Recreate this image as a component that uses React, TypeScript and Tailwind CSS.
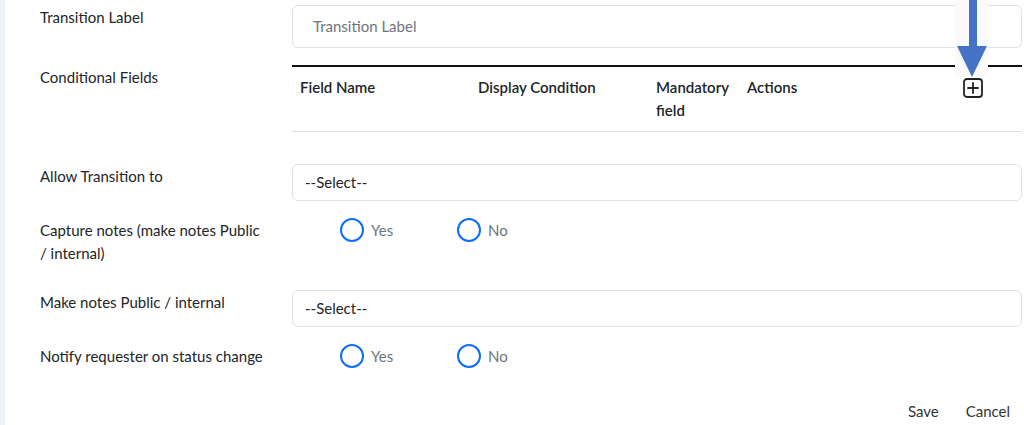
import React from 'react';

function Radio({ label }: { label: string }) {
  return (
    <label className="flex items-center gap-[7px] text-[#6c757d]">
      <span className="inline-block h-[24px] w-[24px] rounded-full border-2 border-[#0d6efd] bg-white" />
      <span>{label}</span>
    </label>
  );
}

function YesNo() {
  return (
    <div className="flex items-center pl-[48px] leading-[23px]">
      <div className="w-[117px]">
        <Radio label="Yes" />
      </div>
      <Radio label="No" />
    </div>
  );
}

function PlusSquare() {
  return (
    <svg width="20" height="20" viewBox="0 0 20 20" fill="none">
      <rect x="1" y="1" width="18" height="18" rx="3" stroke="#222" strokeWidth="1.8" />
      <path d="M10 5v10M5 10h10" stroke="#222" strokeWidth="1.8" strokeLinecap="round" />
    </svg>
  );
}

export default function App() {
  return (
    <div
      className="flex h-[425px] w-full overflow-hidden bg-white text-[15px] text-[#212529]"
      style={{ fontFamily: 'Lato, "Open Sans", sans-serif' }}
    >
      <div className="w-[5px] shrink-0 bg-[#edf2fb]" />

      <div className="relative flex flex-1 flex-col pl-[35px] pr-[2px]">
        {/* Transition label */}
        <div className="mt-[5px] flex">
          <div className="w-[252px] shrink-0 pt-[1px] leading-[23px]">Transition Label</div>
          <div className="flex h-[43px] flex-1 items-center rounded-md border border-[#dee2e6] pl-[20px] text-[#6c757d]">
            Transition Label
          </div>
        </div>

        {/* Conditional fields */}
        <div className="mt-[17px] flex">
          <div className="w-[252px] shrink-0 pt-[1px] leading-[23px]">Conditional Fields</div>
          <div className="flex-1 border-t-2 border-[#111]">
            <div className="grid grid-cols-[178px_178px_91px_216px_1fr] border-b border-[#dee2e6] font-semibold leading-[23px]">
              <div className="px-[8px] pb-[9px] pt-[9px]">Field Name</div>
              <div className="px-[8px] pb-[9px] pt-[9px]">Display Condition</div>
              <div className="px-[8px] pb-[9px] pt-[9px]">Mandatory field</div>
              <div className="px-[8px] pb-[9px] pt-[9px]">Actions</div>
              <div className="flex items-start px-[8px] pt-[11px]">
                <PlusSquare />
              </div>
            </div>
          </div>
        </div>

        {/* Allow transition */}
        <div className="mt-[32px] flex">
          <div className="w-[252px] shrink-0 pt-[1px] leading-[23px]">Allow Transition to</div>
          <div className="flex h-[37px] flex-1 items-center rounded-md border border-[#dee2e6] pl-[12px]">
            --Select--
          </div>
        </div>

        {/* Capture notes */}
        <div className="mt-[17px] flex">
          <div className="w-[228px] shrink-0 pt-[1px] leading-[23px]">
            Capture notes (make notes Public / internal)
          </div>
          <div className="ml-[24px]">
            <YesNo />
          </div>
        </div>

        {/* Make notes public */}
        <div className="mt-[25px] flex">
          <div className="w-[252px] shrink-0 pt-[1px] leading-[23px]">Make notes Public / internal</div>
          <div className="flex h-[37px] flex-1 items-center rounded-md border border-[#dee2e6] pl-[12px]">
            --Select--
          </div>
        </div>

        {/* Notify requester */}
        <div className="mt-[17px] flex">
          <div className="w-[252px] shrink-0 pt-[1px] leading-[23px]">Notify requester on status change</div>
          <YesNo />
        </div>

        {/* Footer */}
        <div className="mt-[32px] flex justify-end gap-[27px] pr-[12px] leading-[23px] text-[#333]">
          <button>Save</button>
          <button>Cancel</button>
        </div>

        {/* annotation arrow */}
        <div className="absolute left-[950px] top-0 h-[77px] w-[33px] bg-[#fafafa]">
          <svg width="33" height="77" viewBox="0 0 33 77">
            <rect x="14" y="0" width="8" height="47" fill="#4472c4" />
            <polygon points="2,46 32,46 17,77" fill="#4472c4" />
          </svg>
        </div>
      </div>
    </div>
  );
}
